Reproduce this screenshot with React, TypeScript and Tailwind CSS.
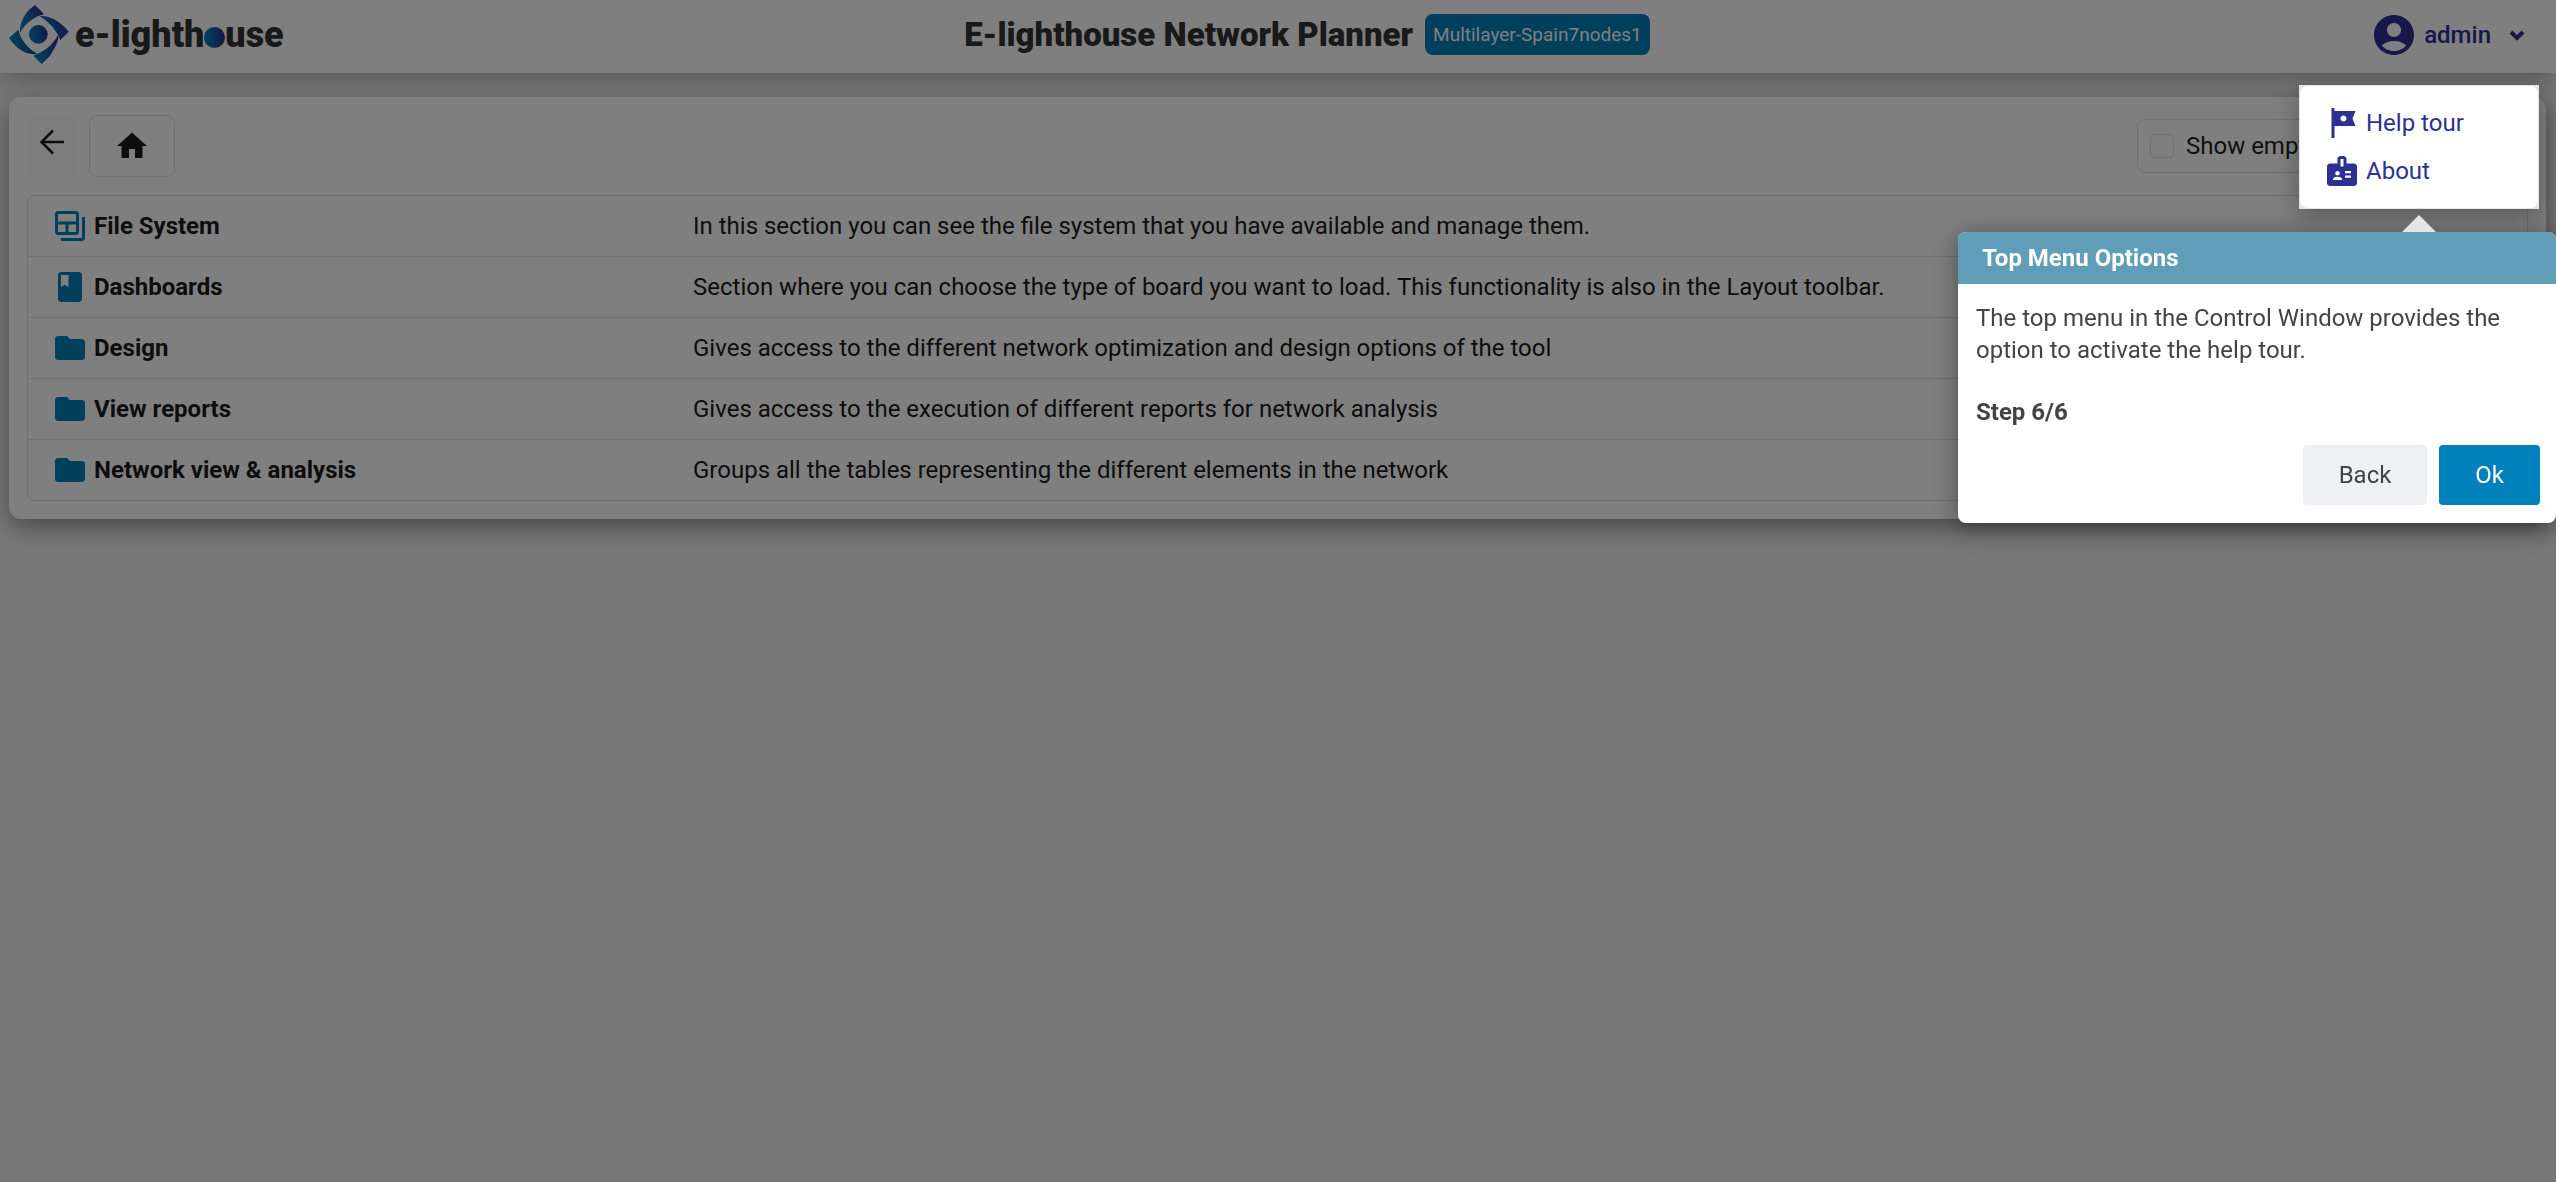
import {
  MdAccountCircle,
  MdBackupTable,
  MdBadge,
  MdBook,
  MdFolder,
  MdHome,
  MdTour,
} from "react-icons/md";
import type { IconType } from "react-icons";

interface Section {
  title: string;
  description: string;
  icon: IconType;
}

const sections: Section[] = [
  {
    title: "File System",
    description: "In this section you can see the file system that you have available and manage them.",
    icon: MdBackupTable,
  },
  {
    title: "Dashboards",
    description:
      "Section where you can choose the type of board you want to load. This functionality is also in the Layout toolbar.",
    icon: MdBook,
  },
  {
    title: "Design",
    description: "Gives access to the different network optimization and design options of the tool",
    icon: MdFolder,
  },
  {
    title: "View reports",
    description: "Gives access to the execution of different reports for network analysis",
    icon: MdFolder,
  },
  {
    title: "Network view & analysis",
    description: "Groups all the tables representing the different elements in the network",
    icon: MdFolder,
  },
];

function LogoMark() {
  return (
    <svg width="60" height="60" viewBox="0 0 180 180" aria-hidden="true">
      <defs>
        <linearGradient id="logo-fill" x1="0" y1="0.6" x2="1" y2="0.35">
          <stop offset="0.1" stopColor="#0080b8" />
          <stop offset="1" stopColor="#2b2d90" />
        </linearGradient>
      </defs>
      <g fill="url(#logo-fill)">
        <path d="M78 0 L105 27 C75 36 48 54 33 84 C32 50 48 20 78 0Z" />
        <path d="M90 32 C122 32 150 44 179 80 L154 106 C146 80 122 50 90 32Z" />
        <path d="M149 88 C148 118 132 136 122 154 L98 177 L73 152 C106 140 130 122 149 88Z" />
        <path d="M0 99 L28 74 C34 104 58 132 86 147 C52 150 26 136 0 99Z" />
        <circle cx="88" cy="88" r="28" />
      </g>
    </svg>
  );
}

function Logo() {
  return (
    <a href="#" aria-label="e-lighthouse" className="flex items-center gap-1.5">
      <LogoMark />
      <span className="flex items-center text-4xl font-black text-[#333]">
        e-lighth
        <svg width="21" height="21" viewBox="0 0 21 21" className="mt-1.5" aria-hidden="true">
          <defs>
            <linearGradient id="logo-dot">
              <stop offset="0.1" stopColor="#0080b8" />
              <stop offset="1" stopColor="#2b2d90" />
            </linearGradient>
          </defs>
          <circle cx="10.5" cy="10.5" r="10.5" fill="url(#logo-dot)" />
        </svg>
        use
      </span>
    </a>
  );
}

function UserMenu() {
  return (
    <div className="absolute right-[17px] top-[85px] z-20 w-60 bg-[#e6e6e6] p-px text-[#2e3092] shadow-[0_8px_24px_rgba(0,0,0,0.3)]">
      <ul className="rounded-lg bg-white py-[13px] pl-6">
        <li>
          <a href="#" className="flex h-12 items-center gap-1.5">
            <MdTour className="size-9" />
            Help tour
          </a>
        </li>
        <li>
          <a href="#" className="flex h-12 items-center gap-1.5">
            <MdBadge className="size-9" />
            About
          </a>
        </li>
      </ul>
    </div>
  );
}

function TopBar() {
  return (
    <header className="relative flex h-[73px] items-center justify-between bg-white px-[9px] pb-1 shadow-[0_4px_24px_rgba(0,0,0,0.3)]">
      <Logo />
      <div className="flex items-center gap-3">
        <h1 className="text-[33px] font-black leading-10 text-[#333]">E-lighthouse Network Planner</h1>
        <span className="flex h-[41px] items-center rounded-lg bg-[#0080b8] px-2 text-[19px] text-white">
          Multilayer-Spain7nodes1
        </span>
      </div>
      <button type="button" className="flex items-center gap-1.5 pl-10 pr-5 font-medium text-[#2e3092]">
        <MdAccountCircle className="size-12" />
        admin
        <svg width="20" height="20" viewBox="0 0 20 20" className="ml-2.5" aria-hidden="true">
          <path d="M4 7 L10 13 L16 7" fill="none" stroke="currentColor" strokeWidth="4" />
        </svg>
      </button>
      <UserMenu />
    </header>
  );
}

function Toolbar() {
  return (
    <div className="flex items-center">
      <button
        type="button"
        aria-label="Back"
        className="flex h-[58px] w-[50px] justify-center rounded-lg bg-[#fbfbfb] pt-3 text-[#1a1a1a]"
      >
        <svg width="26" height="26" viewBox="0 0 26 26" fill="none" stroke="currentColor" strokeWidth="2.5" aria-hidden="true">
          <path d="M14 1.5 L2.5 13 L14 24.5 M2.5 13 H25" />
        </svg>
      </button>
      <button
        type="button"
        aria-label="Home"
        className="ml-3 flex h-[62px] w-[86px] items-center justify-center rounded-lg border border-[#e0e0e0] text-[#1a1a1a]"
      >
        <MdHome className="size-9" />
      </button>
      <label className="ml-auto flex h-[54px] w-[391px] items-center rounded-lg border border-[#e0e0e0] pl-3 text-[#212121]">
        <input
          type="checkbox"
          className="mr-3 size-6 appearance-none rounded-[5px] border border-[#e0e0e0]"
        />
        Show empty sections
      </label>
    </div>
  );
}

function SectionTable() {
  return (
    <div className="mt-[18px] overflow-hidden rounded-lg border border-[#e0e0e0]">
      <table className="w-full table-fixed border-separate border-spacing-0 text-left text-[#1a1a1a]">
        <tbody>
          {sections.map(({ title, description, icon: Icon }) => (
            <tr key={title} className="group">
              <th
                scope="row"
                className="h-[61px] w-[665px] border-b border-[#e0e0e0] py-0 pl-6 font-bold group-last:h-[60px] group-last:border-b-0"
              >
                <a href="#" className="flex items-center gap-1.5">
                  <Icon className="size-9 text-[#0080b8]" />
                  {title}
                </a>
              </th>
              <td className="border-b border-[#e0e0e0] py-0 group-last:border-b-0">{description}</td>
            </tr>
          ))}
        </tbody>
      </table>
    </div>
  );
}

function TourStep() {
  return (
    <section
      role="dialog"
      aria-labelledby="tour-title"
      className="absolute right-0 top-[232px] z-30 w-[598px] rounded-lg bg-white text-[#444] shadow-[0_4px_24px_rgba(0,0,0,0.4)]"
    >
      <svg width="34" height="17" viewBox="0 0 34 17" className="absolute -top-[17px] right-[120px]" aria-hidden="true">
        <path d="M17 0 L34 17 H0Z" fill="#e6e6e6" />
      </svg>
      <h2 id="tour-title" className="flex h-[52px] items-center rounded-t-lg bg-[#609db9] px-6 font-bold text-white">
        Top Menu Options
      </h2>
      <div className="px-[18px] pt-[18px] leading-8">
        <p>The top menu in the Control Window provides the option to activate the help tour.</p>
        <p className="mt-[30px] font-bold">Step 6/6</p>
      </div>
      <div className="flex justify-end gap-3 px-4 pb-[18px] pt-[17px]">
        <button type="button" className="h-[60px] w-[124px] rounded bg-[#eff0f3]">
          Back
        </button>
        <button type="button" className="h-[60px] w-[101px] rounded bg-[#0081bc] text-white">
          Ok
        </button>
      </div>
    </section>
  );
}

export default function App() {
  return (
    <div className="relative min-h-screen bg-[#f0f0f0] font-['Roboto',sans-serif] text-2xl">
      <TopBar />
      <main className="pl-[9px] pr-2.5 pt-6">
        <div className="rounded-xl bg-white p-[18px] shadow-[0_8px_24px_rgba(0,0,0,0.4)]">
          <Toolbar />
          <SectionTable />
        </div>
      </main>
      {/* Dimmed backdrop behind the tour */}
      <div className="fixed inset-0 z-10 bg-black/50" />
      <TourStep />
    </div>
  );
}
